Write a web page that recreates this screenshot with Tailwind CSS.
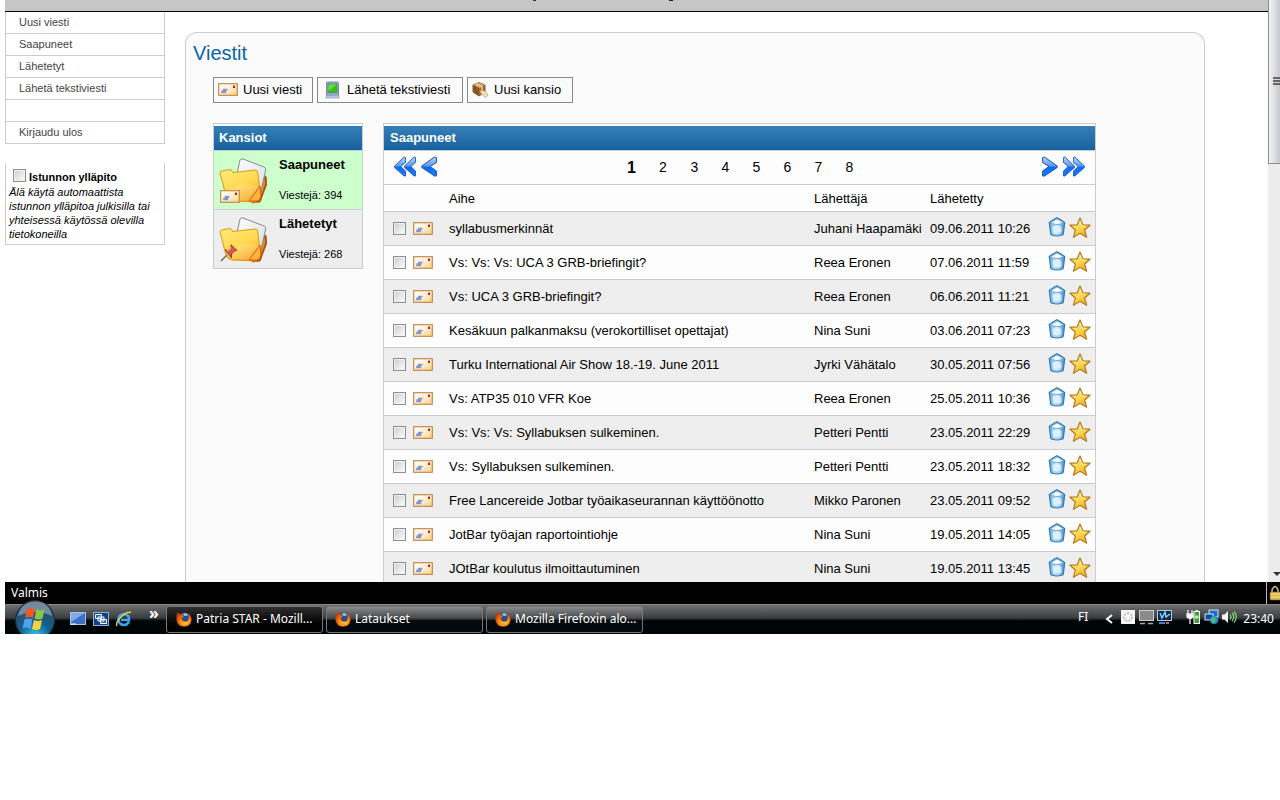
<!DOCTYPE html>
<html lang="fi">
<head>
<meta charset="utf-8">
<title>Viestit</title>
<script src="https://cdn.jsdelivr.net/npm/@tailwindcss/browser@4"></script>
</head>
<body class="bg-white text-[13px] text-black font-['Liberation_Sans',sans-serif]">
<svg width="0" height="0" class="absolute" aria-hidden="true">
  <defs>
    <linearGradient id="gPaper" x1="0" y1="0" x2="1" y2="1"><stop offset="0" stop-color="#fff"/><stop offset=".4" stop-color="#fff3e2"/><stop offset="1" stop-color="#ffd080"/></linearGradient>
    <linearGradient id="gFolder" x1="0" y1="0" x2="0.6" y2="1"><stop offset="0" stop-color="#ffec80"/><stop offset=".6" stop-color="#ffd84e"/><stop offset="1" stop-color="#f9a222"/></linearGradient>
    <linearGradient id="gSheet" x1="0" y1="0" x2="1" y2="1"><stop offset="0" stop-color="#fff"/><stop offset="1" stop-color="#d6dbe4"/></linearGradient>
    <linearGradient id="gArrow" x1="0" y1="0" x2="0" y2="1"><stop offset="0" stop-color="#b9d8ff"/><stop offset=".45" stop-color="#5a9cf2"/><stop offset=".55" stop-color="#0d6cf4"/><stop offset="1" stop-color="#1b7dff"/></linearGradient>
    <linearGradient id="gStar" x1="0" y1="0" x2="1" y2="1"><stop offset="0" stop-color="#fff3a0"/><stop offset=".5" stop-color="#ffd64a"/><stop offset="1" stop-color="#f49a1c"/></linearGradient>
    <linearGradient id="gBin" x1="0" y1="0" x2="1" y2="0"><stop offset="0" stop-color="#5fa8dc"/><stop offset=".35" stop-color="#b4daf4"/><stop offset=".65" stop-color="#a4d0f0"/><stop offset="1" stop-color="#3f8cca"/></linearGradient>
    <radialGradient id="gOrb" cx=".5" cy=".9" r=".85"><stop offset="0" stop-color="#35c4f0"/><stop offset=".45" stop-color="#12608e"/><stop offset="1" stop-color="#33475a"/></radialGradient>
    <radialGradient id="gFox" cx=".6" cy=".7" r=".7"><stop offset="0" stop-color="#ffc832"/><stop offset=".5" stop-color="#f98a16"/><stop offset="1" stop-color="#c9400c"/></radialGradient>
    <symbol id="mail" viewBox="0 0 20 13">
      <rect x=".7" y=".7" width="18.6" height="11.600" fill="url(#gPaper)" stroke="#c08a4c" stroke-width="1.200"/>
      <path d="M5 6.500h4.500M3.500 8h5M3 9.500h5" stroke="#7f9ac8" stroke-width="1.300"/>
      <rect x="15" y="2.600" width="2" height="2.400" fill="#b8240e"/>
    </symbol>
    <symbol id="folder" viewBox="0 0 48 46">
      <path d="M38 24l9-6 1 8-7 18-8 1z" fill="#ee8a12" stroke="#8a4a08" stroke-width=".6"/>
      <path d="M21 2q1-1.500 3-1L45 9q2 1 1.700 3L40 42 14 34z" fill="url(#gSheet)" stroke="#85888e" stroke-width="1"/>
      <path d="M1 15q0-2 2-2l8-1.500q2 0 2.500 3l23-2.500q2 0 2.200 2L42 42q0 2-2 2L13 43q-5-1-6-5z" fill="url(#gFolder)" stroke="#dd9a0b" stroke-width="1"/>
      <path d="M7 37q14-16 33-8l1.500 14L13 42z" fill="#fff" opacity=".18"/>
      <path d="M41 28L30 43h9l3-4z" fill="#ffb43c" stroke="#e4520c" stroke-width="1"/>
      <path d="M46 19l1 7-6 17-3 1" fill="none" stroke="#9a4b0c" stroke-width="1.200"/>
    </symbol>
    <symbol id="chev" viewBox="0 0 16 21" preserveAspectRatio="none">
      <path d="M13.500 1L15.400 1.500V6.500L9 10.500L15.400 15V20H13.500L.8 11.500V10z" fill="url(#gArrow)" stroke="#1c53b0" stroke-width="1" stroke-linejoin="round"/>
    </symbol>
    <symbol id="bin" viewBox="0 0 18 20">
      <path d="M1.300 5.500L5 3 9 .8 13 3l3.700 2.500L15.300 17q-.4 1-1.500 1.200Q9 19.800 4.200 18.200 3 18 2.700 17z" fill="url(#gBin)" stroke="#2f78b4" stroke-width="1.200"/>
      <path d="M2.500 5.600L9 2l6.500 3.600Q9 9.500 2.500 5.600z" fill="#f4faff" stroke="#5c9fd0" stroke-width=".8"/>
      <path d="M4.500 10l4.500-2 4 2 .5 5-4 1.500-4.500-1z" fill="#e6f5ff" opacity=".85"/>
    </symbol>
    <symbol id="star" viewBox="0 0 22 21">
      <path d="M11 1l2.800 6.800 7.200.4-5.400 4.800 2 7.200L11 16.300 4.400 20.200l2-7.200L1 8.200l7.200-.4z" fill="url(#gStar)" stroke="#b27a24" stroke-width="1.200" stroke-linejoin="round"/>
      <path d="M11 4l1.800 5 3.700.4" fill="none" stroke="#fffbd0" stroke-width="1"/>
    </symbol>
    <symbol id="fox" viewBox="0 0 16 16">
      <circle cx="8.500" cy="7.500" r="6" fill="#1d4f9e"/>
      <path d="M7 2.500q3-1.500 5 1-1 2-3 1.500Q7 5 7 2.500z" fill="#7fc4f0"/>
      <path d="M1.500 1.500L4 3.300q2-.6 3.200 0Q6 4.500 7.800 6q-1 .8-2.200 1 .4 3.500 3.600 3.600 3.600 0 3.400-4.600-.1-2-1-3.800 4 2.500 3.800 6.600-.5 6.600-7.400 6.800Q1 15.200.6 8.600.5 4.500 1.500 1.500z" fill="url(#gFox)" stroke="#a83a08" stroke-width=".5"/>
    </symbol>
  </defs>
</svg>

<div class="pl-[5px]">
  <div class="flex -mb-1">
    <div class="flex-1 min-w-0">
      <header class="h-3 bg-[#c6c6c6] border-b border-black flex gap-[133px] pl-[528px]">
        <i class="block w-[3px] h-px bg-[#333]"></i><i class="block w-[4px] h-px bg-[#222]"></i>
      </header>
      <div class="flex items-stretch">
        <aside class="w-[160px] shrink-0">
          <nav class="border border-t-0 border-[#ccc] text-[11px] text-[#444] divide-y divide-[#ccc]">
            <a href="#" class="flex items-center h-[22px] pl-[13px]">Uusi viesti</a>
            <a href="#" class="flex items-center h-[22px] pl-[13px]">Saapuneet</a>
            <a href="#" class="flex items-center h-[22px] pl-[13px]">Lähetetyt</a>
            <a href="#" class="flex items-center h-[22px] pl-[13px]">Lähetä tekstiviesti</a>
            <div class="h-[22px]"></div>
            <a href="#" class="flex items-center h-[21px] pl-[13px]">Kirjaudu ulos</a>
          </nav>
          <div class="mt-[19px] border border-t-0 border-[#ccc] pt-[6px] pb-[3px] pl-[3px] text-[11px] leading-[14px]">
            <label class="flex items-center gap-[3px] pl-1 h-4 font-bold"><input type="checkbox" class="appearance-none size-[13px] -mt-1 border border-[#8e8f8f] bg-linear-to-br from-[#c8ccd2] to-white outline-1 -outline-offset-2 outline-[#f0f0f0]"><span>Istunnon ylläpito</span></label>
            <p class="italic">Älä käytä automaattista<br>istunnon ylläpitoa julkisilla tai<br>yhteisessä käytössä olevilla<br>tietokoneilla</p>
          </div>
        </aside>

        <main class="flex-1 min-w-0 ml-5 mr-[63px] mt-5 border border-b-0 border-[#ccc] rounded-t-[12px] bg-[#fbfbfb] pl-[7px]">
          <h1 class="text-[20px] leading-6 mt-2 text-[#0a64a4]">Viestit</h1>
          <div class="flex gap-1 mt-3 ml-5">
            <button class="flex items-center gap-[5px] h-[26px] w-[100px] pl-1 border border-[#888] bg-[#fafafa] whitespace-nowrap"><svg class="w-5 h-[13px] -mt-[2px]"><use href="#mail"/></svg>Uusi viesti</button>
            <button class="flex items-center gap-[5px] h-[26px] w-[146px] pl-1 border border-[#888] bg-[#fafafa] whitespace-nowrap"><svg class="w-5 h-5" viewBox="0 0 20 20"><path d="M4.500 3q0-1 1-1h10q1 0 1 1v13h-12z" fill="#8fa8cc" stroke="#7890b4"/><path d="M4 15.500h13V18H4z" fill="#b8c8de" stroke="#8ca0be" stroke-width=".6"/><rect x="6" y="4" width="9" height="8.500" fill="#38c222" stroke="#4c9048" stroke-width=".8"/><path d="M6.500 4.500h8L6.500 11z" fill="#7ee058" opacity=".8"/></svg>Lähetä tekstiviesti</button>
            <button class="flex items-center gap-[5px] h-[26px] w-[106px] pl-1 border border-[#888] bg-[#fafafa] whitespace-nowrap"><svg class="w-[17px] h-4" viewBox="0 0 17 16"><path d="M1 3l6-2.500L13 3v7l-6 4-6-4z" fill="#a06a34" stroke="#6e4218" stroke-width=".8"/><path d="M1 3l6 3 6-3-6-2.500z" fill="#d6a468"/><path d="M7 6v8l-6-4V3z" fill="#8a5524"/><path d="M4 2l6 3v3" fill="none" stroke="#e8ce9c" stroke-width="1.500"/><path d="M8 8.500l4 0 4 4.500-2.500 2.800L8.500 11z" fill="#f4deb0" stroke="#b89a60" stroke-width=".7"/></svg>Uusi kansio</button>
          </div>

          <div class="flex items-start gap-5 mt-5 ml-5">
            <section class="w-[150px] border border-[#ccc] border-t-[#b4d0e8]">
              <h2 class="mt-[2px] h-[24px] leading-[24px] pl-[5px] font-bold text-white bg-linear-to-b from-[#367fb8] to-[#15619e]">Kansiot</h2>
              <a href="#" class="flex h-[60px] border-y border-[#ccc] bg-[#ccffcc]">
                <span class="relative w-[65px] pt-[7px] pl-[5px]"><svg class="w-12 h-[46px]"><use href="#folder"/></svg><svg class="absolute left-[6px] top-[39px] w-5 h-[13px]"><use href="#mail"/></svg></span>
                <span class="flex flex-col pt-[6px]"><b class="leading-4">Saapuneet</b><span class="text-[11px] leading-[14px] mt-[15px]">Viestejä: 394</span></span>
              </a>
              <a href="#" class="flex h-[58px] bg-[#eee]">
                <span class="relative w-[65px] pt-[7px] pl-[5px]"><svg class="w-12 h-[46px]"><use href="#folder"/></svg><svg class="absolute left-[6px] top-[34px] w-[18px] h-[18px]" viewBox="0 0 18 18"><path d="M1 17l6-6" stroke="#666" stroke-width="1.500"/><path d="M5 6l3 0 3-3V.8L17 6.500l-2.500.5-3 3v4z" fill="#d85a48" stroke="#8a2a20" stroke-width=".8"/><path d="M7 7l4-3.500" stroke="#ffc0b4" stroke-width="1.200"/></svg></span>
                <span class="flex flex-col pt-[6px]"><b class="leading-4">Lähetetyt</b><span class="text-[11px] leading-[14px] mt-[15px]">Viestejä: 268</span></span>
              </a>
            </section>

            <section class="flex-1 min-w-0 mr-[108px] border border-b-0 border-[#ccc] bg-[#fdfdfd]">
              <h2 class="mt-[2px] h-[24px] leading-[24px] pl-[6px] font-bold text-white bg-linear-to-b from-[#367fb8] to-[#15619e]">Saapuneet</h2>
              <div class="flex items-center justify-between h-[35px] border-y border-[#ccc] px-[10px]">
                <div class="flex items-center gap-[5px] pb-[2px]">
                  <a href="#" aria-label="Ensimmäinen"><svg class="w-[22px] h-[21px]" viewBox="0 0 22 21"><use href="#chev" width="12" height="21"/><use href="#chev" x="10" width="12" height="21"/></svg></a>
                  <a href="#" aria-label="Edellinen"><svg class="w-4 h-[21px]"><use href="#chev"/></svg></a>
                </div>
                <div class="flex text-[14px] items-center pl-[2px]">
                  <b class="w-[31px] text-center text-[16px]">1</b><a href="#" class="w-8 text-center">2</a><a href="#" class="w-[31px] text-center">3</a><a href="#" class="w-[31px] text-center">4</a><a href="#" class="w-[31px] text-center">5</a><a href="#" class="w-[31px] text-center">6</a><a href="#" class="w-[31px] text-center">7</a><a href="#" class="w-[31px] text-center">8</a>
                </div>
                <div class="flex items-center gap-[5px] pb-[2px]">
                  <a href="#" aria-label="Seuraava"><svg class="w-4 h-[21px] -scale-x-100"><use href="#chev"/></svg></a>
                  <a href="#" aria-label="Viimeinen"><svg class="w-[22px] h-[21px] -scale-x-100" viewBox="0 0 22 21"><use href="#chev" width="12" height="21"/><use href="#chev" x="10" width="12" height="21"/></svg></a>
                </div>
              </div>
              <table class="w-full table-fixed border-collapse text-left whitespace-nowrap">
                <colgroup><col class="w-[65px]"><col><col class="w-[116px]"><col class="w-[118px]"><col class="w-[47px]"></colgroup>
                <thead><tr class="h-[26px] border-b border-[#ccc]"><th></th><th class="font-normal pt-[2px]">Aihe</th><th class="font-normal pt-[2px]">Lähettäjä</th><th class="font-normal pt-[2px]">Lähetetty</th><th></th></tr></thead>
                <tbody id="rows"></tbody>
              </table>
            </section>
          </div>
        </main>
      </div>
    </div>
    <div class="w-3 shrink-0 bg-[#ececec] flex flex-col justify-between overflow-hidden" aria-hidden="true">
      <div class="h-[164px] border-l border-b border-[#8c8c8c] bg-linear-to-r from-[#f4f4f4] to-[#c6c8cc] pt-[77px] pl-1 flex flex-col gap-[1px]"><i class="block h-[2px] w-2 bg-[#666]"></i><i class="block h-[2px] w-2 bg-[#666]"></i><i class="block h-[2px] w-2 bg-[#666]"></i></div>
      <svg class="w-3 h-[14px]" viewBox="0 0 12 14"><path d="M5 0h8L9 4z" fill="#333"/></svg>
    </div>
  </div>

  <div class="relative h-[22px] bg-black text-white text-[12px] leading-[22px] pl-[6px] flex justify-between font-['Noto_Sans',sans-serif]">
    <span>Valmis</span>
    <span class="border-l border-[#bbb] w-[14px] overflow-hidden"><svg class="w-[14px] h-[22px]" viewBox="0 0 14 22"><path d="M5 11V8q3-7 6 0v3" fill="none" stroke="#c8b878" stroke-width="1.600"/><rect x="3" y="10" width="11" height="8" rx="1" fill="#dcb64c" stroke="#8a6c20" stroke-width=".6"/><path d="M4 12h10M4 15h10" stroke="#f6e49c"/></svg></span>
  </div>
  <footer class="relative h-[30px] text-white text-[12px] flex items-center border-t border-[#888] bg-linear-to-b from-[#6e6e6e] from-0% via-[#3a3d40] via-45% to-[#000508] to-55% font-['Noto_Sans',sans-serif] whitespace-nowrap">
    <button aria-label="Käynnistä" class="relative ml-[9px] w-[42px] h-[30px]"><svg class="absolute left-0 bottom-0 w-[42px] h-[34px]" viewBox="0 0 42 34"><circle cx="21" cy="20" r="19.500" fill="url(#gOrb)" stroke="#1a2c38"/><path d="M4 16Q7 2 21 1.500T38 16Q21 8 4 16z" fill="#fff" opacity=".35"/><path d="M13 9q4-2 8 0l-2 9q-4-2-8 0z" fill="#f0582a"/><path d="M22.500 9.500q4 2 8 0l-2 9q-4 2-8 0z" fill="#8cc83c"/><path d="M10.500 19.500q4-2 8 0l-2 9q-4-2-8 0z" fill="#4ea4ea"/><path d="M20 20q4 2 8 0l-2 9q-4 2-8 0z" fill="#ffd23c"/></svg></button>
    <svg class="ml-[14px] w-4 h-[14px]" viewBox="0 0 16 14"><rect x=".5" y=".5" width="15" height="12" fill="#3c70c4" stroke="#a9c0e4"/><path d="M1 1h14L1 10z" fill="#7ea8e6"/><path d="M1 12h5" stroke="#fff"/></svg>
    <svg class="ml-[7px] w-4 h-[14px]" viewBox="0 0 16 14"><rect x=".5" y=".5" width="15" height="13" fill="#14407e" stroke="#8cb0e0"/><path d="M2.500 2.500h6v4h-6zM5 5h6v4H5zM7.500 7.500h6v4h-6z" fill="#2d62ac" stroke="#fff"/></svg>
    <svg class="ml-[7px] w-4 h-4" viewBox="0 0 16 16"><path d="M13 10.500Q11.500 14 8 14 2.500 13.500 2.500 8.500T8 3q5.500.5 5 6H5" fill="none" stroke="#3aa8f0" stroke-width="2.600"/><path d="M1 15Q-1 12 5 6T15 1.500" fill="none" stroke="#f8c838" stroke-width="1.500"/></svg>
    <span class="ml-[17px] w-[17px] -mt-3 text-[16px] font-bold">»</span>
    <button class="flex items-center gap-1 w-[157px] h-[27px] pl-[9px] border border-[#777] rounded-[3px] bg-linear-to-b from-[#303030] via-[#101010] via-45% to-black"><svg class="size-4"><use href="#fox"/></svg>Patria STAR - Mozill...</button>
    <button class="ml-[3px] flex items-center gap-1 w-[157px] h-[27px] pl-2 border border-[#777] rounded-[3px] bg-linear-to-b from-[#8a8a8a] via-[#45494c] via-45% to-[#05090c] to-55%"><svg class="size-4"><use href="#fox"/></svg>Lataukset</button>
    <button class="ml-[3px] flex items-center gap-1 w-[157px] h-[27px] pl-2 border border-[#777] rounded-[3px] bg-linear-to-b from-[#8a8a8a] via-[#45494c] via-45% to-[#05090c] to-55%"><svg class="size-4"><use href="#fox"/></svg>Mozilla Firefoxin alo...</button>
    <div class="ml-auto flex items-center pr-[6px]">
      <span class="-mt-1">FI</span>
      <svg class="ml-[17px] w-2 h-[10px]" viewBox="0 0 8 10"><path d="M7 1L2 5l5 4" fill="none" stroke="#fff" stroke-width="2"/></svg>
      <svg class="ml-2 -mt-1 w-[14px] h-[14px]" viewBox="0 0 14 14"><rect width="14" height="14" fill="#f4f4f4"/><circle cx="7" cy="7" r="4" fill="none" stroke="#888" stroke-dasharray="2 1.500"/></svg>
      <svg class="ml-1 w-[15px] h-[15px] -mt-1" viewBox="0 0 15 15"><rect x=".5" y=".5" width="14" height="10" fill="#8a8a8a" stroke="#ccc"/><path d="M1 13.500h5M9 13.500h5" stroke="#aaa" stroke-width="1.500"/></svg>
      <svg class="ml-[3px] w-[15px] h-[15px] -mt-1" viewBox="0 0 15 15"><rect x=".5" y=".5" width="14" height="10" fill="#0c2a4c" stroke="#bcd"/><path d="M3 3l2 5 3-6 1 5 4-3" fill="none" stroke="#8ccaf6" stroke-width="1.500"/><path d="M2 13h6" stroke="#2f8ae0" stroke-width="2"/><path d="M9 13h3" stroke="#d06a28" stroke-width="2"/></svg>
      <svg class="ml-[14px] w-[15px] h-4 -mt-1" viewBox="0 0 15 16"><path d="M2 1v4M6 1v4M1 5h6v3Q4 11 1 8zM4 9v6" fill="#fff" stroke="#eee" stroke-width="1.300"/><rect x="8" y="2.500" width="5.500" height="12" fill="#3f9c3c" stroke="#fff"/><path d="M9.500 1.500h2.500" stroke="#fff"/><path d="M9 8h3.500" stroke="#baf0a4" stroke-width="3"/></svg>
      <svg class="ml-[3px] w-[15px] h-4 -mt-1" viewBox="0 0 15 16"><rect x="5" y="1" width="9" height="7" fill="#1e6cd0" stroke="#d4e4f4"/><rect x="1" y="5" width="8" height="6" fill="#124c9c" stroke="#d4e4f4"/><circle cx="10" cy="11" r="4" fill="#2a8ad8"/><path d="M7 10q2-3 4-1t-1 5q-3 0-3-4z" fill="#50c060"/></svg>
      <svg class="ml-[3px] w-[15px] h-4 -mt-1" viewBox="0 0 15 16"><path d="M0 5.500h2.500L6 2v12l-3.500-3.500H0z" fill="#f4f4f4"/><path d="M8 5.500q2 2.500 0 5M10 4q3.500 4 0 8M12 2.500q4.500 5.500 0 11" fill="none" stroke="#8ade78" stroke-width="1.200"/></svg>
      <span class="ml-[6px]">23:40</span>
    </div>
  </footer>
</div>

<template id="row">
  <tr class="h-[34px] border-b border-[#ccc] odd:bg-[#eee]">
    <td><span class="flex items-center gap-[7px] pl-[9px]"><input type="checkbox" class="appearance-none size-[13px] border border-[#8e8f8f] bg-linear-to-br from-[#c8ccd2] to-white outline-1 -outline-offset-2 outline-[#f0f0f0]"><svg class="w-5 h-[13px]"><use href="#mail"/></svg></span></td>
    <td class="pt-[2px]"></td><td class="pt-[2px]"></td><td class="pt-[2px]"></td>
    <td><span class="flex items-center gap-[3px] pb-[2px]"><button aria-label="Poista"><svg class="w-[18px] h-5"><use href="#bin"/></svg></button><button aria-label="Suosikki"><svg class="w-[22px] h-[21px]"><use href="#star"/></svg></button></span></td>
  </tr>
</template>
<script>
const messages = [
  ["syllabusmerkinnät","Juhani Haapamäki","09.06.2011 10:26"],
  ["Vs: Vs: Vs: UCA 3 GRB-briefingit?","Reea Eronen","07.06.2011 11:59"],
  ["Vs: UCA 3 GRB-briefingit?","Reea Eronen","06.06.2011 11:21"],
  ["Kesäkuun palkanmaksu (verokortilliset opettajat)","Nina Suni","03.06.2011 07:23"],
  ["Turku International Air Show 18.-19. June 2011","Jyrki Vähätalo","30.05.2011 07:56"],
  ["Vs: ATP35 010 VFR Koe","Reea Eronen","25.05.2011 10:36"],
  ["Vs: Vs: Vs: Syllabuksen sulkeminen.","Petteri Pentti","23.05.2011 22:29"],
  ["Vs: Syllabuksen sulkeminen.","Petteri Pentti","23.05.2011 18:32"],
  ["Free Lancereide Jotbar työaikaseurannan käyttöönotto","Mikko Paronen","23.05.2011 09:52"],
  ["JotBar työajan raportointiohje","Nina Suni","19.05.2011 14:05"],
  ["JOtBar koulutus ilmoittautuminen","Nina Suni","19.05.2011 13:45"]
];
const tpl = document.getElementById("row"), body = document.getElementById("rows");
for (const m of messages) {
  const tr = tpl.content.cloneNode(true).firstElementChild;
  m.forEach((t, i) => tr.cells[i + 1].textContent = t);
  tr.querySelector("input").setAttribute("aria-label", "Valitse: " + m[0]);
  body.append(tr);
}
</script>
</body>
</html>
